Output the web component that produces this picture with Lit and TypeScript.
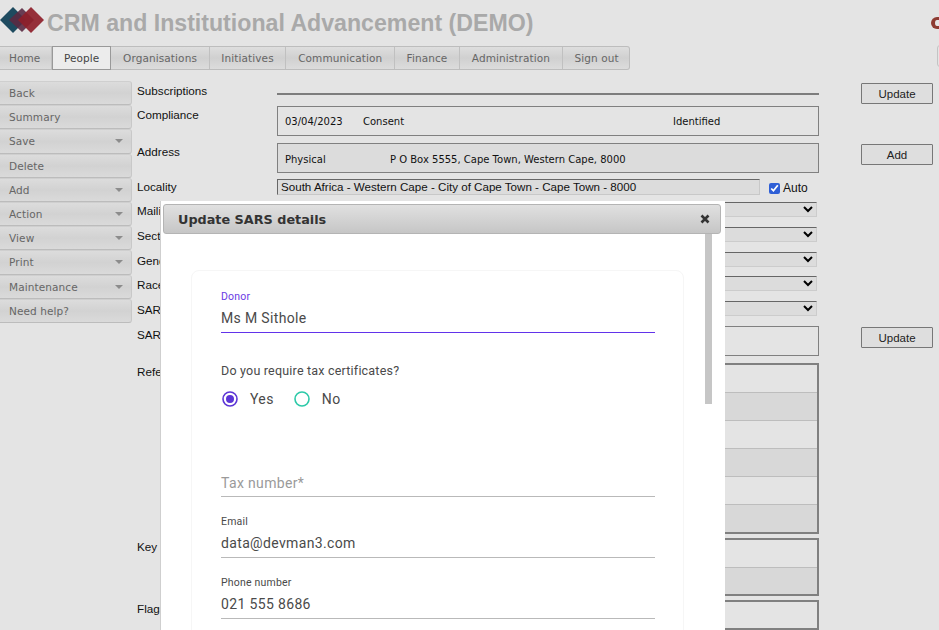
import { LitElement, html, css, nothing } from 'lit';
import { customElement } from 'lit/decorators.js';

const NAV = ['Home', 'People', 'Organisations', 'Initiatives', 'Communication', 'Finance', 'Administration', 'Sign out'];

const SIDE = [
  { label: 'Back' },
  { label: 'Summary' },
  { label: 'Save', menu: true },
  { label: 'Delete' },
  { label: 'Add', menu: true },
  { label: 'Action', menu: true },
  { label: 'View', menu: true },
  { label: 'Print', menu: true },
  { label: 'Maintenance', menu: true },
  { label: 'Need help?' },
];

type Row = { label: string; gap: number; h: number; kind: string; button?: string; stripes?: number };

// gap = space above the row, h = row height
const ROWS: Row[] = [
  { label: 'Subscriptions', gap: 0, h: 21, kind: 'line', button: 'Update' },
  { label: 'Compliance', gap: 3, h: 30, kind: 'compliance' },
  { label: 'Address', gap: 7, h: 30, kind: 'address', button: 'Add' },
  { label: 'Locality', gap: 5, h: 16, kind: 'locality' },
  { label: 'Mailing', gap: 8, h: 15, kind: 'select' },
  { label: 'Sector', gap: 10, h: 15, kind: 'select' },
  { label: 'Gender', gap: 10, h: 15, kind: 'select' },
  { label: 'Race', gap: 9, h: 15, kind: 'select' },
  { label: 'SARS', gap: 10, h: 15, kind: 'select' },
  { label: 'SARS', gap: 10, h: 30, kind: 'box', button: 'Update' },
  { label: 'Reference', gap: 7, h: 171, kind: 'stripes', stripes: 6 },
  { label: 'Key', gap: 4, h: 58, kind: 'stripes', stripes: 2 },
  { label: 'Flags', gap: 4, h: 30, kind: 'stripes', stripes: 1 },
];

@customElement('app-root')
export class AppRoot extends LitElement {
  static styles = css`
    :host {
      display: block;
      position: relative;
      width: 939px;
      height: 630px;
      overflow: hidden;
      background: #e4e4e4;
      font-family: 'Liberation Sans', Arial, sans-serif;
      color: #111;
    }

    .header {
      display: flex;
      align-items: center;
      height: 46px;
    }

    .logo {
      flex: none;
      width: 45px;
      height: 46px;
      display: block;
    }

    .title {
      margin-left: 2px;
      font-size: 23.15px;
      font-weight: 700;
      color: #a9a9a9;
      white-space: nowrap;
    }

    .corner {
      position: absolute;
      left: 931px;
      top: 17px;
      width: 8px;
      height: 12px;
      border: solid #8d3b32;
      border-width: 3px 0 3px 4px;
      border-radius: 7px 0 0 7px;
      box-sizing: border-box;
    }

    .corner-btn {
      position: absolute;
      left: 937px;
      top: 45px;
      width: 6px;
      height: 22px;
      border: 1px solid #c4c4c4;
      border-radius: 3px;
      box-sizing: border-box;
    }

    .nav {
      display: flex;
      width: 630px;
      height: 24px;
      box-sizing: border-box;
      border: 1px solid #bdbdbd;
      border-left: none;
      border-radius: 0 3px 3px 0;
      background: linear-gradient(#dedede, #d0d0d0 50%, #dcdcdc);
      font-family: 'DejaVu Sans', sans-serif;
      font-size: 10.5px;
      letter-spacing: 0.1px;
      color: #666;
      white-space: nowrap;
    }

    .nav span {
      display: flex;
      align-items: center;
      padding: 0 11.7px;
      border-right: 1px solid #c0c0c0;
    }

    .nav span:first-child {
      padding: 0 10.5px 0 9px;
    }

    .nav span:last-child {
      border-right: none;
    }

    .nav .active {
      margin: -1px 0;
      padding: 0 11px;
      background: #ececec;
      border: 1px solid #999;
      color: #444;
    }

    .body {
      display: flex;
      margin-top: 11px;
    }

    .side {
      flex: none;
      width: 132px;
      font-family: 'DejaVu Sans', sans-serif;
      font-size: 10.5px;
      letter-spacing: 0.1px;
      color: #666;
    }

    .side div {
      display: flex;
      align-items: center;
      justify-content: space-between;
      height: 24.2px;
      box-sizing: border-box;
      padding: 0 8px 0 9px;
      border-top: 1px solid #cfcfcf;
      border-bottom: 1px solid #bcbcbc;
      border-right: 1px solid #c8c8c8;
      border-radius: 0 3px 3px 0;
      background: linear-gradient(#dcdcdc, #d2d2d2 50%, #dadada);
    }

    .side i {
      width: 0;
      height: 0;
      border: 4px solid transparent;
      border-top: 4px solid #8c8c8c;
      border-bottom: none;
    }

    .main {
      flex: none;
      width: 796px;
      margin: 1px 0 0 5px;
    }

    .row {
      display: grid;
      grid-template-columns: 140px 542px 42px 72px;
    }

    .label {
      padding-top: 2px;
      font-size: 11.7px;
      line-height: 14px;
      white-space: nowrap;
    }

    .btn {
      grid-column: 4;
      align-self: start;
      box-sizing: border-box;
      height: 21px;
      margin-top: 1px;
      padding: 0;
      border: 1px solid #777;
      border-radius: 1px;
      background: #dedede;
      color: #222;
      font: 11.5px 'Liberation Sans', Arial, sans-serif;
    }

    .rule {
      height: 2px;
      margin-top: 11px;
      background: #7d7d7d;
    }

    .box {
      box-sizing: border-box;
      height: 100%;
      border: 1px solid #808080;
      font-family: 'DejaVu Sans', sans-serif;
      font-size: 10px;
      color: #111;
    }

    .cells {
      display: flex;
      align-items: center;
    }

    .cells span {
      white-space: pre;
    }

    .consent-date {
      width: 78px;
      padding-left: 7px;
    }

    .consent-text {
      width: 310px;
    }

    .address {
      padding-top: 2px;
      background: #dcdcdc;
    }

    .addr-type {
      width: 105px;
      padding-left: 7px;
    }

    .locality {
      display: flex;
      align-items: center;
    }

    .locality-input {
      box-sizing: border-box;
      width: 483px;
      height: 16px;
      padding-left: 3px;
      border: 1px solid #c8c8c8;
      border-top-color: #666;
      border-left-color: #666;
      background: #dcdcdc;
      font-size: 11.6px;
      line-height: 13px;
      white-space: nowrap;
    }

    .auto {
      display: flex;
      align-items: center;
      margin: 3px 0 0 9px;
      font-size: 12px;
    }

    .auto input {
      width: 11px;
      height: 11px;
      margin: 0 3px 0 0;
      accent-color: #2f5fd6;
    }

    select {
      display: block;
      box-sizing: border-box;
      width: 540px;
      height: 15px;
      padding: 0;
      border: 1px solid #cccccc;
      border-top-color: #666;
      border-radius: 0;
      background-color: #dcdcdc;
      font-size: 10px;
    }

    .stripes {
      display: flex;
      flex-direction: column;
      border-width: 2px 2px 2px 1px;
    }

    .stripes div {
      flex: 1;
      background: #e4e4e4;
      border-bottom: 1px solid #bdbdbd;
    }

    .stripes div:nth-child(even) {
      background: #d8d8d8;
    }

    .stripes div:last-child {
      border-bottom: none;
    }

    .modal {
      position: absolute;
      left: 160px;
      top: 201px;
      width: 565px;
      height: 429px;
      box-sizing: border-box;
      padding: 3px 4px 0 2px;
      overflow: hidden;
      border-left: 1px solid #cfcfcf;
      background: #fff;
    }

    .modal-title {
      display: flex;
      align-items: center;
      justify-content: space-between;
      box-sizing: border-box;
      height: 30px;
      padding: 0 10px 0 14px;
      border: 1px solid #b4b4b4;
      border-radius: 3px;
      background: linear-gradient(#e0e0e0, #c6c6c6);
      color: #333;
      font: 700 12.8px 'DejaVu Sans', sans-serif;
    }

    .modal-title svg {
      display: block;
    }

    .scroll {
      position: absolute;
      left: 544px;
      top: 33px;
      width: 7px;
      height: 170px;
      background: #c6c6c6;
    }

    .card {
      box-sizing: border-box;
      width: 493px;
      height: 400px;
      margin: 36px 0 0 28px;
      padding: 19px 28px 0 29px;
      border: 1px solid #f6f6f6;
      border-radius: 8px;
      font-family: Roboto, sans-serif;
      color: #4a4a4a;
    }

    .field {
      border-bottom: 1px solid #b9b9b9;
    }

    .field label {
      display: block;
      height: 14px;
      font-size: 10.5px;
      line-height: 14px;
      letter-spacing: 0.2px;
    }

    .field p {
      margin: 0;
      padding: 4px 0;
      font-size: 14px;
      line-height: 20px;
      letter-spacing: 0.35px;
    }

    .field.focused {
      border-bottom-color: #6233ea;
    }

    .field.focused label {
      color: #6a3be4;
    }

    .field.empty p {
      padding: 5px 0 3px;
      color: #9a9a9a;
    }

    .email,
    .phone {
      margin-top: 18px;
    }

    .question {
      margin-top: 30px;
      font-size: 12.5px;
      line-height: 16px;
      letter-spacing: 0.2px;
    }

    .radios {
      display: flex;
      align-items: center;
      height: 20px;
      margin-top: 10px;
      font-size: 14px;
      letter-spacing: 0.4px;
    }

    .radios svg {
      display: block;
      margin-left: 1px;
    }

    .radios span {
      margin: 0 19px 0 12px;
    }

    .radios span:last-child {
      margin: 0 0 0 12px;
    }

    .tax {
      margin-top: 59px;
    }
  `;

  private renderContent(r: Row) {
    switch (r.kind) {
      case 'line':
        return html`<div class="rule"></div>`;
      case 'compliance':
        return html`<div class="box cells">
          <span class="consent-date">03/04/2023</span>
          <span class="consent-text">Consent</span>
          <span>Identified</span>
        </div>`;
      case 'address':
        return html`<div class="box cells address">
          <span class="addr-type">Physical</span>
          <span>P O Box 5555, Cape Town, Western Cape, 8000</span>
        </div>`;
      case 'locality':
        return html`<div class="locality">
          <div class="locality-input">South Africa - Western Cape - City of Cape Town - Cape Town - 8000</div>
          <label class="auto"><input type="checkbox" checked />Auto</label>
        </div>`;
      case 'select':
        return html`<select aria-label=${r.label}></select>`;
      case 'stripes':
        return html`<div class="box stripes">
          ${Array.from({ length: r.stripes ?? 0 }, () => html`<div></div>`)}
        </div>`;
      default:
        return html`<div class="box"></div>`;
    }
  }

  private renderLogo() {
    return html`<svg class="logo" viewBox="0 0 45 46">
      <polygon points="13,7 26,20 13,33 0,20" fill="#1e4a5f" />
      <polygon points="22,8 34,20 22,32 9,20" fill="#5a2a42" opacity="0.9" />
      <polygon points="31,7 44,20 31,33 18,20" fill="#8e1f2a" opacity="0.92" />
    </svg>`;
  }

  private renderModal() {
    return html`<div class="modal">
      <div class="modal-title">
        <span>Update SARS details</span>
        <svg width="10" height="10" viewBox="0 0 10 10">
          <path d="M1.5 1.5l7 7M8.5 1.5l-7 7" stroke="#333" stroke-width="2.6" />
        </svg>
      </div>
      <div class="scroll"></div>
      <div class="card">
        <div class="field focused">
          <label>Donor</label>
          <p>Ms M Sithole</p>
        </div>
        <div class="question">Do you require tax certificates?</div>
        <div class="radios">
          <svg width="16" height="16" viewBox="0 0 16 16">
            <circle cx="8" cy="8" r="7" fill="none" stroke="#5c35d6" stroke-width="1.6" />
            <circle cx="8" cy="8" r="4" fill="#5c35d6" />
          </svg>
          <span>Yes</span>
          <svg width="16" height="16" viewBox="0 0 16 16">
            <circle cx="8" cy="8" r="7" fill="none" stroke="#2cc9a8" stroke-width="1.6" />
          </svg>
          <span>No</span>
        </div>
        <div class="field empty tax">
          <p>Tax number*</p>
        </div>
        <div class="field email">
          <label>Email</label>
          <p>data@devman3.com</p>
        </div>
        <div class="field phone">
          <label>Phone number</label>
          <p>021 555 8686</p>
        </div>
      </div>
    </div>`;
  }

  render() {
    return html`
      <div class="header">
        ${this.renderLogo()}
        <div class="title">CRM and Institutional Advancement (DEMO)</div>
      </div>
      <div class="corner"></div>
      <div class="corner-btn"></div>
      <div class="nav">
        ${NAV.map((n) => html`<span class=${n === 'People' ? 'active' : ''}>${n}</span>`)}
      </div>
      <div class="body">
        <div class="side">
          ${SIDE.map((s) => html`<div>${s.label}${s.menu ? html`<i></i>` : nothing}</div>`)}
        </div>
        <div class="main">
          ${ROWS.map(
            (r) => html`<div class="row" style="height:${r.h}px;margin-top:${r.gap}px">
              <div class="label">${r.label}</div>
              <div>${this.renderContent(r)}</div>
              ${r.button ? html`<button class="btn">${r.button}</button>` : nothing}
            </div>`
          )}
        </div>
      </div>
      ${this.renderModal()}
    `;
  }
}
